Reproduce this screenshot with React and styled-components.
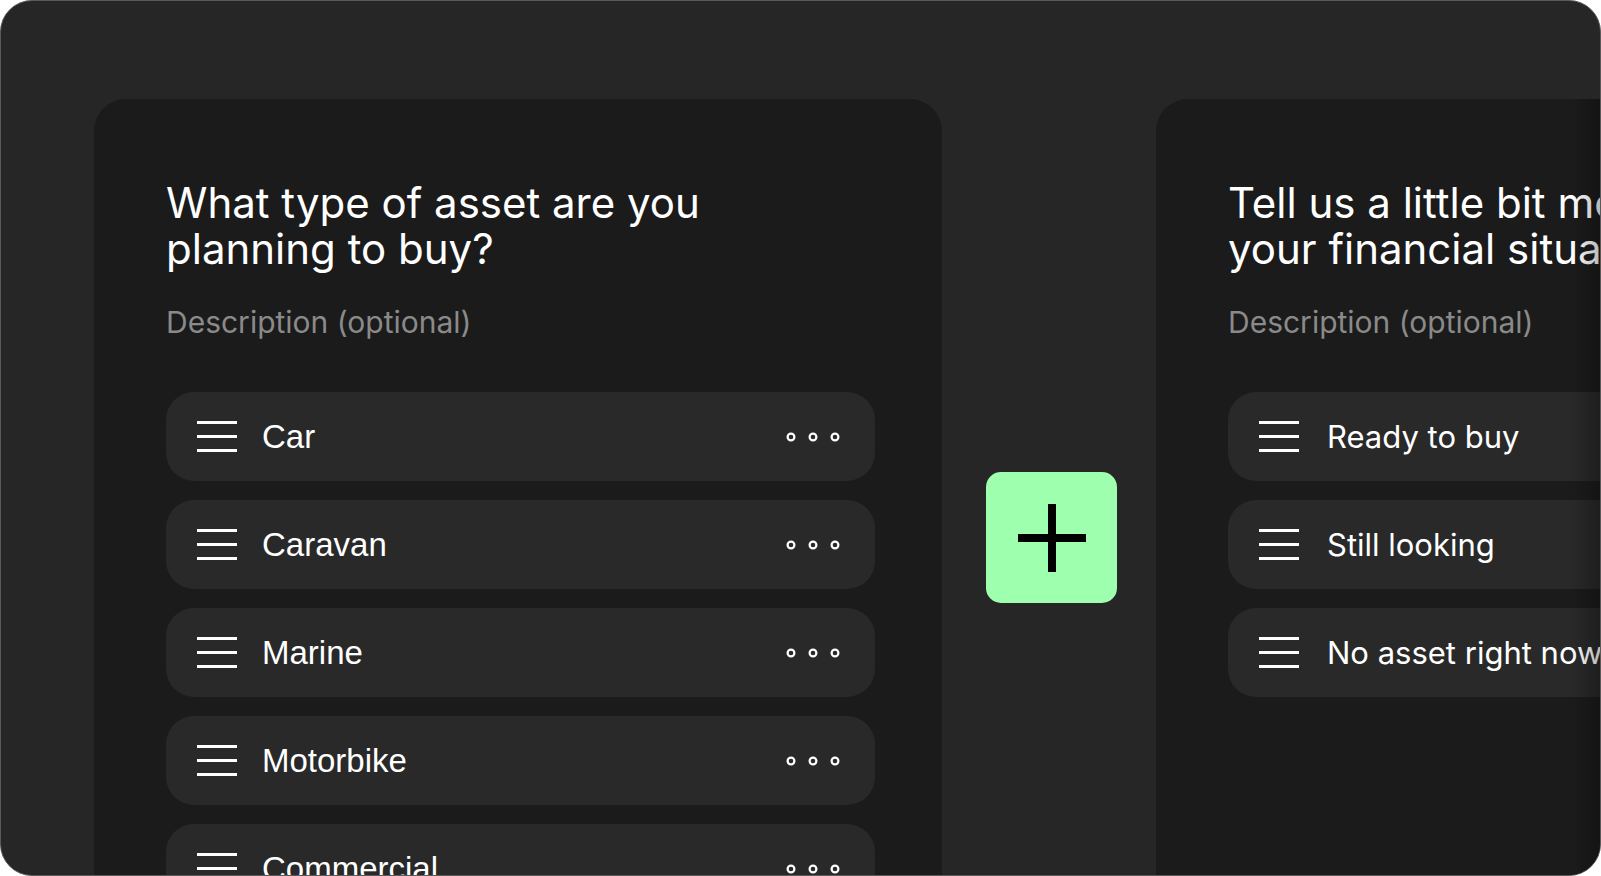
import React from 'react';
import styled, { createGlobalStyle } from 'styled-components';

const GlobalStyle = createGlobalStyle`
  html, body {
    margin: 0;
    padding: 0;
    background: #ffffff;
  }
  body {
    font-family: Inter, 'Liberation Sans', sans-serif;
  }
`;

const Frame = styled.div`
  position: relative;
  width: 1601px;
  height: 876px;
  box-sizing: border-box;
  border: 1px solid #5a5a5a;
  border-radius: 32px;
  background: #262626;
  overflow: hidden;
  display: flex;
  align-items: flex-start;
  padding: 98px 0 0 93px;

  &::after {
    content: '';
    position: absolute;
    top: 98px;
    right: 0;
    bottom: 0;
    width: 28px;
    background: linear-gradient(to right, rgba(0, 0, 0, 0), rgba(0, 0, 0, 0.28));
    pointer-events: none;
  }
`;

const Card = styled.section`
  flex: 0 0 848px;
  height: 860px;
  box-sizing: border-box;
  background: #1b1b1b;
  border-radius: 32px;
  padding: 81px 67px 0 72px;
`;

const Title = styled.h2`
  margin: 0;
  font-family: Inter, sans-serif;
  font-weight: 400;
  font-size: 42px;
  line-height: 46px;
  color: #ffffff;
  white-space: nowrap;
`;

const Description = styled.p`
  margin: 32px 0 0;
  font-family: Inter, sans-serif;
  font-size: 30px;
  line-height: 36px;
  color: #8a8a8a;
  white-space: nowrap;
`;

const OptionList = styled.div`
  display: flex;
  flex-direction: column;
  gap: 19px;
  margin-top: 52px;
`;

const Option = styled.div`
  display: flex;
  align-items: center;
  gap: 25px;
  height: 89px;
  box-sizing: border-box;
  padding: 0 34px 0 31px;
  border-radius: 28px;
  background: #292929;
  flex-shrink: 0;
`;

const Label = styled.span`
  color: #ffffff;
  white-space: nowrap;
  font-family: ${(p) => (p.$narrow ? "'Liberation Sans', Arial, sans-serif" : 'Inter, sans-serif')};
  font-size: ${(p) => (p.$narrow ? '33px' : '31px')};
  margin-left: ${(p) => (p.$narrow ? '0' : '3px')};
`;

const More = styled.span`
  margin-left: auto;
  display: flex;
`;

const PlusColumn = styled.div`
  flex: 0 0 214px;
  padding-top: 373px;
  display: flex;
  justify-content: flex-start;
`;

const AddButton = styled.button`
  margin-left: 44px;
  width: 131px;
  height: 131px;
  border: none;
  border-radius: 15px;
  background: #9effae;
  display: flex;
  align-items: center;
  justify-content: center;
  padding: 0;
  cursor: pointer;
`;

const Handle = () => (
  <svg width="40" height="31" viewBox="0 0 40 31" fill="none">
    <path d="M0 1.5h40M0 15.5h40M0 29.5h40" stroke="#fff" strokeWidth="3" />
  </svg>
);

const Dots = () => (
  <svg width="56" height="12" viewBox="0 0 56 12" fill="none">
    <circle cx="6" cy="6" r="3.4" stroke="#fff" strokeWidth="2.2" />
    <circle cx="28" cy="6" r="3.4" stroke="#fff" strokeWidth="2.2" />
    <circle cx="50" cy="6" r="3.4" stroke="#fff" strokeWidth="2.2" />
  </svg>
);

const Plus = () => (
  <svg width="68" height="68" viewBox="0 0 68 68" fill="none">
    <path d="M34 0v68M0 34h68" stroke="#000" strokeWidth="8" />
  </svg>
);

const QUESTIONS = [
  {
    lines: ['What type of asset are you', 'planning to buy?'],
    narrow: true,
    showMore: true,
    options: ['Car', 'Caravan', 'Marine', 'Motorbike', 'Commercial'],
  },
  {
    lines: ['Tell us a little bit more about', 'your financial situation?'],
    narrow: false,
    showMore: false,
    options: ['Ready to buy', 'Still looking', 'No asset right now'],
  },
];

const QuestionCard = ({ question }) => (
  <Card>
    <Title>
      {question.lines[0]}
      <br />
      {question.lines[1]}
    </Title>
    <Description>Description (optional)</Description>
    <OptionList>
      {question.options.map((option) => (
        <Option key={option}>
          <Handle />
          <Label $narrow={question.narrow}>{option}</Label>
          {question.showMore && (
            <More>
              <Dots />
            </More>
          )}
        </Option>
      ))}
    </OptionList>
  </Card>
);

export default function App() {
  return (
    <>
      <GlobalStyle />
      <Frame>
        <QuestionCard question={QUESTIONS[0]} />
        <PlusColumn>
          <AddButton aria-label="Add question">
            <Plus />
          </AddButton>
        </PlusColumn>
        <QuestionCard question={QUESTIONS[1]} />
      </Frame>
    </>
  );
}
